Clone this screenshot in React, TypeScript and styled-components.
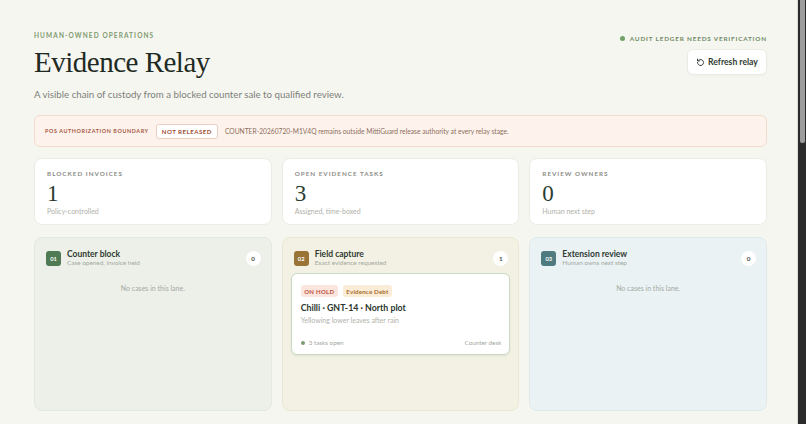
import React from "react";
import styled, { createGlobalStyle } from "styled-components";

const Global = createGlobalStyle`
  html { background: #f6f6f1; }
  body {
    margin: 0;
    background: #f6f6f1;
    font-family: Lato, "Noto Sans", sans-serif;
    color: #2c3a2f;
    overflow: hidden;
  }
`;

const Page = styled.div`
  box-sizing: border-box;
  padding: 32px 39px 13px 34px;
`;

const ScrollTrack = styled.div`
  position: fixed;
  top: 0;
  right: 0;
  bottom: 0;
  width: 8px;
  background: #2b2b2b;
  border-left: 1px solid #dcdcd6;
`;

const ScrollThumb = styled.div`
  margin: 0 1px 0 2px;
  height: 143px;
  background: #9c9c9c;
  border-radius: 0 0 2px 2px;
`;

const Header = styled.header`
  display: flex;
  justify-content: space-between;
  align-items: flex-start;
`;

const HeadLeft = styled.div`
  display: flex;
  flex-direction: column;
`;

const Eyebrow = styled.div`
  font-size: 6.5px;
  font-weight: 700;
  letter-spacing: 1.1px;
  text-transform: uppercase;
  color: #7f9a6f;
  line-height: 8px;
`;

const Title = styled.h1`
  margin: 4px 0 0;
  font-family: "Liberation Serif", "DejaVu Serif", serif;
  font-weight: 400;
  font-size: 29px;
  letter-spacing: -0.5px;
  line-height: 36px;
  color: #1f2a23;
`;

const Subtitle = styled.p`
  margin: 7px 0 0;
  font-size: 9.7px;
  color: #7c7f78;
  line-height: 14px;
`;

const HeadRight = styled.div`
  display: flex;
  flex-direction: column;
  align-items: flex-end;
  gap: 7px;
  padding-top: 3px;
`;

const Status = styled.div`
  display: flex;
  align-items: center;
  gap: 5px;
  font-size: 6.4px;
  font-weight: 700;
  letter-spacing: 0.8px;
  text-transform: uppercase;
  color: #6f8c66;
`;

const Dot = styled.span<{ $size?: number; $color?: string }>`
  width: ${(p) => p.$size ?? 5}px;
  height: ${(p) => p.$size ?? 5}px;
  border-radius: 50%;
  background: ${(p) => p.$color ?? "#6fa36a"};
  display: inline-block;
  flex: none;
`;

const Button = styled.button`
  height: 26px;
  width: 80px;
  padding: 0;
  border: 1px solid #ebebe5;
  border-radius: 6px;
  background: #fff;
  font-family: inherit;
  font-size: 8.6px;
  font-weight: 700;
  color: #2e3a31;
  display: flex;
  align-items: center;
  justify-content: center;
  gap: 3px;
  box-shadow: 0 1px 2px rgba(0, 0, 0, 0.03);
`;

const Banner = styled.div`
  margin-top: 14px;
  height: 32px;
  box-sizing: border-box;
  background: #fdf3ec;
  border: 1px solid #f1dccd;
  border-radius: 6px;
  display: flex;
  align-items: center;
  padding: 0 10px;
  gap: 7px;
`;

const BannerLabel = styled.span`
  font-size: 5.4px;
  font-weight: 700;
  letter-spacing: 0.6px;
  text-transform: uppercase;
  color: #a5593f;
`;

const BannerPill = styled.span`
  font-size: 6.1px;
  font-weight: 700;
  letter-spacing: 0.5px;
  color: #9e4c33;
  background: #fff;
  border: 1px solid #ebcfc0;
  border-radius: 3px;
  padding: 3px 5px;
  line-height: 7px;
`;

const BannerText = styled.span`
  font-size: 6.7px;
  color: #8d6e60;
`;

const Stats = styled.div`
  margin-top: 11px;
  display: grid;
  grid-template-columns: repeat(3, 1fr);
  gap: 10px;
`;

const StatCard = styled.div`
  height: 67px;
  box-sizing: border-box;
  background: #fff;
  border: 1px solid #ecece6;
  border-radius: 8px;
  padding: 11px 12px 9px;
  display: flex;
  flex-direction: column;
`;

const StatLabel = styled.div`
  font-size: 6.3px;
  font-weight: 700;
  letter-spacing: 1px;
  text-transform: uppercase;
  color: #8b8c86;
  line-height: 8px;
`;

const StatValue = styled.div`
  margin-top: 3px;
  font-family: "Liberation Serif", "DejaVu Serif", serif;
  font-size: 23px;
  line-height: 25px;
  color: #2b3d31;
`;

const StatSub = styled.div`
  font-size: 7px;
  color: #b0b1aa;
  line-height: 10px;
`;

const Lanes = styled.div`
  margin-top: 12px;
  display: grid;
  grid-template-columns: repeat(3, 1fr);
  gap: 10px;
`;

const tones = {
  green: { bg: "#ecf0e8", border: "#e3e9de", badge: "#4f7a53" },
  sand: { bg: "#f3f1e4", border: "#ebe7d6", badge: "#9a7436" },
  blue: { bg: "#eaf2f4", border: "#dfe9ec", badge: "#4f7a80" },
};
type Tone = keyof typeof tones;

const Lane = styled.section<{ $tone: Tone }>`
  height: 174px;
  box-sizing: border-box;
  background: ${(p) => tones[p.$tone].bg};
  border: 1px solid ${(p) => tones[p.$tone].border};
  border-radius: 8px;
  padding: 11px 8px 10px 8px;
  display: flex;
  flex-direction: column;
`;

const LaneHead = styled.div`
  display: flex;
  align-items: center;
  gap: 6px;
  padding: 0 2px 0 3px;
`;

const LaneBadge = styled.span<{ $tone: Tone }>`
  width: 15px;
  height: 15px;
  border-radius: 3px;
  background: ${(p) => tones[p.$tone].badge};
  color: #fff;
  font-size: 5.8px;
  font-weight: 700;
  display: flex;
  align-items: center;
  justify-content: center;
  flex: none;
`;

const LaneTitles = styled.div`
  flex: 1;
  display: flex;
  flex-direction: column;
`;

const LaneTitle = styled.div`
  font-size: 8.5px;
  font-weight: 700;
  color: #2f3b32;
  line-height: 10px;
`;

const LaneSub = styled.div`
  font-size: 6.4px;
  color: #a3a9a2;
  line-height: 8px;
`;

const Count = styled.span`
  width: 15px;
  height: 15px;
  border-radius: 50%;
  background: #fff;
  font-size: 6.3px;
  font-weight: 700;
  color: #4a514b;
  display: flex;
  align-items: center;
  justify-content: center;
`;

const Empty = styled.div`
  margin-top: 17px;
  text-align: center;
  font-size: 7px;
  color: #a5aaa4;
`;

const Card = styled.article`
  margin-top: 6px;
  height: 82px;
  box-sizing: border-box;
  background: #fff;
  border: 1px solid #cbdac4;
  border-radius: 6px;
  box-shadow: 0 1px 2px rgba(80, 110, 70, 0.12);
  padding: 11px 8px 8px 9px;
  display: flex;
  flex-direction: column;
`;

const Pills = styled.div`
  display: flex;
  gap: 5px;
`;

const Pill = styled.span<{ $bg: string; $fg: string; $caps?: boolean }>`
  background: ${(p) => p.$bg};
  color: ${(p) => p.$fg};
  font-size: ${(p) => (p.$caps ? "6px" : "6.3px")};
  font-weight: 700;
  letter-spacing: ${(p) => (p.$caps ? "0.3px" : "0.1px")};
  border-radius: 3px;
  padding: 2.5px 3.5px;
  line-height: 7px;
`;

const CardTitle = styled.div`
  margin-top: 5px;
  font-size: 8.8px;
  font-weight: 700;
  color: #2b352d;
  line-height: 11px;
`;

const CardSub = styled.div`
  margin-top: 2px;
  font-size: 7px;
  color: #b1b3ac;
  line-height: 10px;
`;

const CardFoot = styled.div`
  margin-top: auto;
  display: flex;
  align-items: center;
  justify-content: space-between;
  font-size: 6.3px;
  color: #a4a8a2;
`;

const FootLeft = styled.span`
  display: flex;
  align-items: center;
  gap: 4px;
`;

const RefreshIcon = () => (
  <svg width="9" height="9" viewBox="0 0 24 24" fill="none" stroke="#2e3a31" strokeWidth="2.6" strokeLinecap="round" strokeLinejoin="round">
    <path d="M4 12a8 8 0 1 0 3-6.2" />
    <path d="M4 3v5h5" />
  </svg>
);

const lanes: { n: string; tone: Tone; title: string; sub: string; count: number }[] = [
  { n: "01", tone: "green", title: "Counter block", sub: "Case opened, invoice held", count: 0 },
  { n: "02", tone: "sand", title: "Field capture", sub: "Exact evidence requested", count: 1 },
  { n: "03", tone: "blue", title: "Extension review", sub: "Human owns next step", count: 0 },
];

export default function App() {
  return (
    <>
      <Global />
      <Page>
        <Header>
          <HeadLeft>
            <Eyebrow>Human-owned operations</Eyebrow>
            <Title>Evidence Relay</Title>
            <Subtitle>A visible chain of custody from a blocked counter sale to qualified review.</Subtitle>
          </HeadLeft>
          <HeadRight>
            <Status>
              <Dot />
              Audit ledger needs verification
            </Status>
            <Button>
              <RefreshIcon />
              Refresh relay
            </Button>
          </HeadRight>
        </Header>

        <Banner>
          <BannerLabel>POS authorization boundary</BannerLabel>
          <BannerPill>NOT RELEASED</BannerPill>
          <BannerText>COUNTER-20260720-M1V4Q remains outside MittiGuard release authority at every relay stage.</BannerText>
        </Banner>

        <Stats>
          <StatCard>
            <StatLabel>Blocked invoices</StatLabel>
            <StatValue>1</StatValue>
            <StatSub>Policy-controlled</StatSub>
          </StatCard>
          <StatCard>
            <StatLabel>Open evidence tasks</StatLabel>
            <StatValue>3</StatValue>
            <StatSub>Assigned, time-boxed</StatSub>
          </StatCard>
          <StatCard>
            <StatLabel>Review owners</StatLabel>
            <StatValue>0</StatValue>
            <StatSub>Human next step</StatSub>
          </StatCard>
        </Stats>

        <Lanes>
          {lanes.map((l) => (
            <Lane key={l.n} $tone={l.tone}>
              <LaneHead>
                <LaneBadge $tone={l.tone}>{l.n}</LaneBadge>
                <LaneTitles>
                  <LaneTitle>{l.title}</LaneTitle>
                  <LaneSub>{l.sub}</LaneSub>
                </LaneTitles>
                <Count>{l.count}</Count>
              </LaneHead>
              {l.count === 0 ? (
                <Empty>No cases in this lane.</Empty>
              ) : (
                <Card>
                  <Pills>
                    <Pill $bg="#fbe5df" $fg="#c0533e" $caps>ON HOLD</Pill>
                    <Pill $bg="#fbecd8" $fg="#a96e2c">Evidence Debt</Pill>
                  </Pills>
                  <CardTitle>Chilli · GNT-14 · North plot</CardTitle>
                  <CardSub>Yellowing lower leaves after rain</CardSub>
                  <CardFoot>
                    <FootLeft>
                      <Dot $size={4} $color="#7f9b74" />
                      3 tasks open
                    </FootLeft>
                    <span>Counter desk</span>
                  </CardFoot>
                </Card>
              )}
            </Lane>
          ))}
        </Lanes>
      </Page>
      <ScrollTrack>
        <ScrollThumb />
      </ScrollTrack>
    </>
  );
}
